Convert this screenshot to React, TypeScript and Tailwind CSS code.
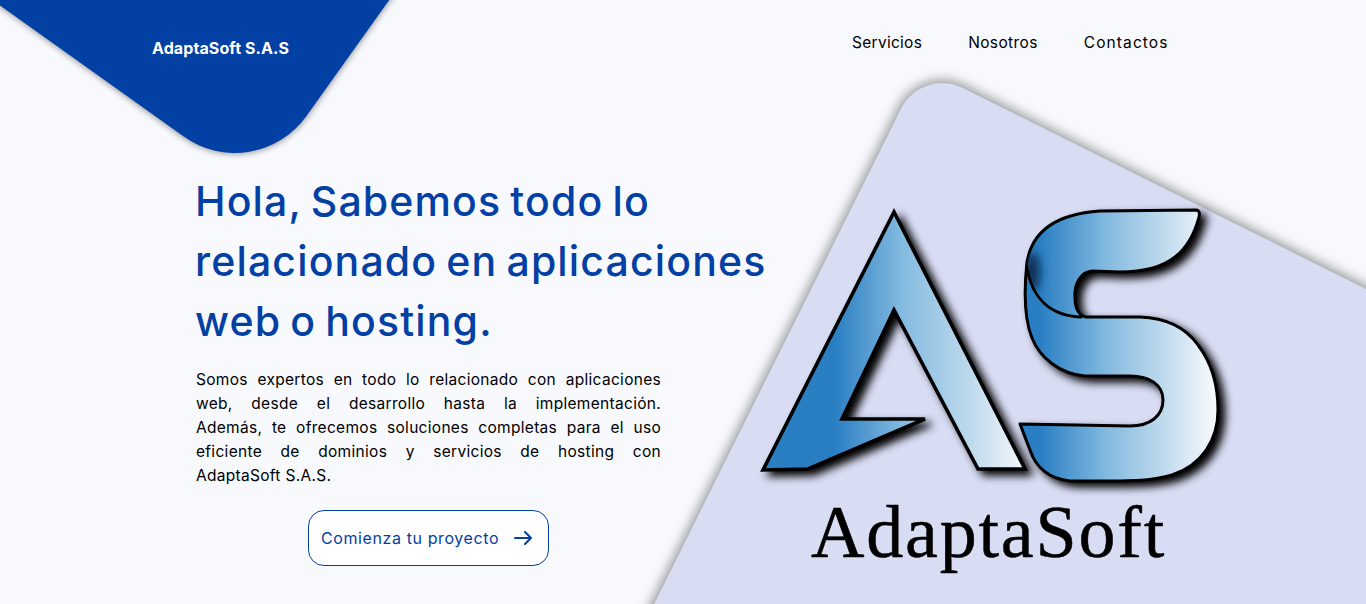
import React from 'react';

const navLinks = [
  { label: 'Servicios', className: 'tracking-[0.28px]' },
  { label: 'Nosotros', className: 'tracking-[0.38px]' },
  { label: 'Contactos', className: 'tracking-[1.1px]' },
];

const paragraphLines = [
  'Somos expertos en todo lo relacionado con aplicaciones',
  'web, desde el desarrollo hasta la implementación.',
  'Además, te ofrecemos soluciones completas para el uso',
  'eficiente de dominios y servicios de hosting con',
];

const AdaptaLogo: React.FC = () => (
  <svg viewBox="750 200 490 294" className="block h-[294px] w-[490px] blur-[0.4px]" overflow="visible">
    <defs>
      <linearGradient id="grad-a" gradientUnits="userSpaceOnUse" x1="835" y1="0" x2="1025" y2="0">
        <stop offset="0" stopColor="#2a7fc3" />
        <stop offset="0.36" stopColor="#85bbe0" />
        <stop offset="0.7" stopColor="#bcd8ec" />
        <stop offset="1" stopColor="#f4f7fb" />
      </linearGradient>
      <linearGradient id="grad-s" gradientUnits="userSpaceOnUse" x1="1040" y1="0" x2="1212" y2="0">
        <stop offset="0" stopColor="#2a7fc3" />
        <stop offset="0.4" stopColor="#85bbe0" />
        <stop offset="0.7" stopColor="#bcd8ec" />
        <stop offset="1" stopColor="#f4f7fb" />
      </linearGradient>
      <filter id="logo-shadow" x="-10%" y="-10%" width="125%" height="125%">
        <feDropShadow dx="6" dy="5" stdDeviation="4.5" floodColor="#000" floodOpacity="1" />
      </filter>
      <filter id="fold-blur" x="-150%" y="-150%" width="400%" height="400%">
        <feGaussianBlur stdDeviation="5" />
      </filter>
      <clipPath id="fold-clip">
        <path d="M1100 211 C1055 214 1032 232 1027 262 C1032 298 1050 316 1082 317 C1075 300 1074 285 1092 271 L1120 272 L1120 211 Z" />
      </clipPath>
    </defs>
    <g filter="url(#logo-shadow)">
      <path
        d="M894 212 L763 470 L808 469 L925 419 L842 419 L894 310 L978 469 L1025 469 Z"
        fill="url(#grad-a)"
        stroke="#000"
        strokeWidth="3.6"
        strokeLinejoin="miter"
      />
      <path
        d="M1196 210 C1199 210 1200 213 1199 217 C1195 232 1189 246 1175 257 C1160 269 1140 272 1120 272 L1092 271 C1080 272 1074 285 1075 298 C1075 308 1079 316 1086 317 L1140 317 C1168 318 1186 328 1198 345 C1211 362 1218 385 1218 410 C1218 440 1202 465 1172 475 C1152 481 1130 481 1110 481 L1070 481 C1050 479 1036 468 1030 450 L1020 424 L1130 426 C1150 426 1163 416 1163 400 C1163 385 1150 376 1130 376 L1085 376 C1060 374 1040 358 1032 338 C1024 318 1024 290 1027 262 C1032 232 1055 214 1100 211 Z"
        fill="url(#grad-s)"
        stroke="#000"
        strokeWidth="3"
        strokeLinejoin="round"
      />
      <g clipPath="url(#fold-clip)">
        <ellipse cx="1032" cy="272" rx="8" ry="20" fill="#0d2f52" filter="url(#fold-blur)" />
      </g>
      <path d="M1027 268 C1032 298 1050 316 1082 317" fill="none" stroke="#000" strokeWidth="3" />
    </g>
  </svg>
);

export default function App() {
  return (
    <div className="relative h-screen w-full overflow-hidden bg-[#f7f9fd] font-['Inter','Liberation_Sans',sans-serif] text-black">
      {/* decorative rotated shapes */}
      <div className="absolute left-[-53px] top-[-411px] h-[500px] w-[500px] rotate-[35.5deg] rounded-[88px] bg-[#0340a4] shadow-[0_0_6px_1px_rgba(0,0,0,0.4)]" />
      <div className="absolute left-[646px] top-[238px] h-[1000px] w-[1000px] rotate-[26.5deg] rounded-[46px] bg-[#d9ddf4] shadow-[0_0_12px_3px_rgba(0,0,0,0.4)]" />

      <header className="relative flex h-[171px] items-start pl-[152px]">
        <a className="mt-[39px] w-[700px] text-base font-bold leading-[18px] tracking-[0.1px] text-white">AdaptaSoft S.A.S</a>
        <nav className="mt-[34px] flex gap-[46px] text-[15.5px] leading-[18px]">
          {navLinks.map(link => (
            <a key={link.label} className={link.className}>{link.label}</a>
          ))}
        </nav>
      </header>

      <main className="relative flex pl-[196px]">
        <section className="w-[554px] shrink-0">
          <h1 className="-ml-px whitespace-nowrap text-[41px] font-medium leading-[60px] tracking-[1.15px] text-[#0340a4] [word-spacing:-3px]">
            Hola, Sabemos todo lo
            <br />
            relacionado en aplicaciones
            <br />
            web o hosting.
          </h1>
          <div className="mt-[17px] w-[465px] text-[15.5px] leading-6 tracking-[0.3px]">
            {paragraphLines.map(line => (
              <p key={line} className="whitespace-nowrap text-justify [text-align-last:justify]">{line}</p>
            ))}
            <p>AdaptaSoft S.A.S.</p>
          </div>
          <div className="mt-[22px] flex w-[465px] justify-center">
            <button className="flex h-14 w-[241px] items-center justify-between rounded-2xl border border-[#0340a4] bg-white pl-[12px] pr-4 text-base tracking-[0.6px] text-[#0340a4]">
              Comienza tu proyecto
              <svg width="18" height="14" viewBox="0 0 18 14" fill="none" stroke="currentColor" strokeWidth="2" strokeLinecap="round" strokeLinejoin="round">
                <path d="M1 7h16M11 1l6 6-6 6" />
              </svg>
            </button>
          </div>
        </section>

        <section className="mt-[29px]">
          <AdaptaLogo />
          <div className="ml-[61px] mt-px whitespace-nowrap font-['Liberation_Serif',serif] text-[74px] leading-none tracking-[1.8px] text-black blur-[0.4px] [-webkit-text-stroke:0.5px_black]">AdaptaSoft</div>
        </section>
      </main>
    </div>
  );
}
